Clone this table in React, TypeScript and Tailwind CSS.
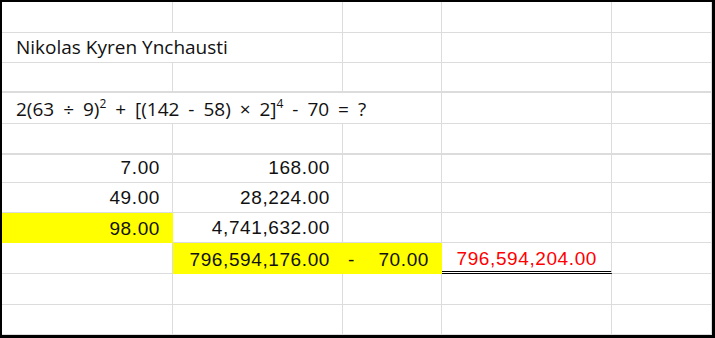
import React from "react";

const WIDTHS = ["w-[171px]", "w-[170px]", "w-[99px]", "w-[170px]", "w-[100px]"];
const HEIGHTS = [
  "h-[31px]", "h-[30px]", "h-[30px]", "h-[31px]", "h-[31px]", "h-[28px]",
  "h-[30px]", "h-[30px]", "h-[31px]", "h-[31px]", "h-[30px]",
];

const textFont = { fontFamily: '"Open Sans", "Noto Sans", sans-serif' };
const numFont = { fontFamily: '"Liberation Sans", Arial, sans-serif' };

type CellProps = {
  col: number;
  className?: string;
  children?: React.ReactNode;
};

function Cell({ col, className = "", children }: CellProps) {
  return (
    <div
      className={`${WIDTHS[col]} shrink-0 h-full border-r border-[#dcdcdc] flex items-end ${className}`}
    >
      {children}
    </div>
  );
}

function Num({ children }: { children: React.ReactNode }) {
  return (
    <span className="w-full text-right pr-[12px] pb-[3px] text-[19px] tracking-[0.6px] leading-[22px] text-[#111]" style={numFont}>
      {children}
    </span>
  );
}

function Row({ i, thick, children }: { i: number; thick?: boolean; children?: React.ReactNode }) {
  return (
    <div className={`flex ${HEIGHTS[i]} ${thick ? "border-b-2" : "border-b"} border-[#dcdcdc]`}>
      {children}
    </div>
  );
}

function EmptyRow({ i, thick }: { i: number; thick?: boolean }) {
  return (
    <Row i={i} thick={thick}>
      {[0, 1, 2, 3, 4].map((c) => (
        <Cell key={c} col={c} />
      ))}
    </Row>
  );
}

export default function App() {
  return (
    <div className="w-[715px] h-[338px] bg-white border-black border-t-2 border-l-2 border-r-[3px] border-b-[3px] overflow-hidden">
      <EmptyRow i={0} />
      <Row i={1}>
        <Cell col={0} className="border-r-0">
          <span className="pl-[14px] pb-[3px] text-[19px] leading-[24px] text-[#111] whitespace-nowrap" style={textFont}>
            Nikolas Kyren Ynchausti
          </span>
        </Cell>
        <Cell col={1} />
        <Cell col={2} />
        <Cell col={3} />
        <Cell col={4} />
      </Row>
      <EmptyRow i={2} thick />
      <Row i={3}>
        <Cell col={0} className="border-r-0">
          <span className="pl-[14px] pb-[2px] text-[19px] leading-[24px] text-[#111] whitespace-pre [word-spacing:4px]" style={textFont}>
            2(63 ÷ 9)<sup className="text-[12px] -top-[0.7em]">2</sup> + [(142 - 58) × 2]<sup className="text-[12px] -top-[0.7em]">4</sup> - 70 = ?
          </span>
        </Cell>
        <Cell col={1} className="border-r-0" />
        <Cell col={2} />
        <Cell col={3} />
        <Cell col={4} />
      </Row>
      <EmptyRow i={4} thick />
      <Row i={5}>
        <Cell col={0}><Num>7.00</Num></Cell>
        <Cell col={1}><Num>168.00</Num></Cell>
        <Cell col={2} />
        <Cell col={3} />
        <Cell col={4} />
      </Row>
      <Row i={6}>
        <Cell col={0}><Num>49.00</Num></Cell>
        <Cell col={1}><Num>28,224.00</Num></Cell>
        <Cell col={2} />
        <Cell col={3} />
        <Cell col={4} />
      </Row>
      <div className="flex h-[30px]">
        <Cell col={0} className="bg-[#ffff00] border-[#ffff00]"><Num>98.00</Num></Cell>
        <Cell col={1} className="border-b"><Num>4,741,632.00</Num></Cell>
        <Cell col={2} className="border-b" />
        <Cell col={3} className="border-b" />
        <Cell col={4} className="border-b" />
      </div>
      <div className="flex h-[31px]">
        <Cell col={0} className="border-b" />
        <Cell col={1} className="bg-[#ffff00] border-[#ffff00]"><Num>796,594,176.00</Num></Cell>
        <Cell col={2} className="bg-[#ffff00] border-[#ffff00] justify-between">
          <span className="pl-[5px] pb-[3px] text-[19px] leading-[22px] text-[#111]" style={numFont}>-</span>
          <span className="pr-[12px] pb-[3px] text-[19px] tracking-[0.6px] leading-[22px] text-[#111]" style={numFont}>70.00</span>
        </Cell>
        <Cell col={3} className="border-b-[3px] border-b-black border-double">
          <span className="w-full text-right pr-[14px] pb-[1px] text-[19px] tracking-[0.6px] leading-[22px] text-[#ff0000]" style={numFont}>
            796,594,204.00
          </span>
        </Cell>
        <Cell col={4} className="border-b" />
      </div>
      <EmptyRow i={9} />
      <EmptyRow i={10} />
    </div>
  );
}
